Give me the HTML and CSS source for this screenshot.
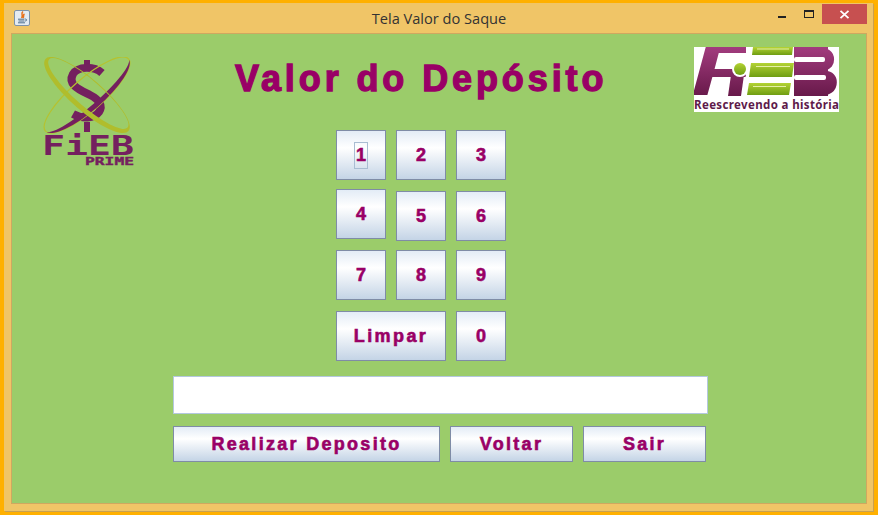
FILE: index.html
```html
<!DOCTYPE html>
<html lang="pt">
<head>
  <meta charset="UTF-8">
  <title>Tela Valor do Saque</title>
  <link rel="stylesheet" href="styles.css">
</head>
<body>
  <div class="window">
    <div class="titlebar">
      <svg class="app-icon" width="16" height="16" viewBox="0 0 16 16">
        <rect x="0.5" y="0.5" width="15" height="15" rx="1.5" fill="#e4ebf2" stroke="#7f93a8"/>
        <path d="M9 1.5 C6 4 10 5 7.5 8 M10.5 4 C8.5 5 10.5 6 9 8" fill="none" stroke="#e8701a" stroke-width="1.5"/>
        <path d="M4 9.2 H10 M4.5 11 H10 M4 12.8 H11 M10.5 9 C13.5 9 13.5 11 10.5 11" fill="none" stroke="#4f6f8f" stroke-width="1"/>
      </svg>
      <span class="window-title">Tela Valor do Saque</span>
      <div class="controls">
        <span class="ctl-min"></span>
        <span class="ctl-max"></span>
        <span class="ctl-close">
          <svg width="11" height="9" viewBox="0 0 11 9"><path d="M1.5 0.8 L9.5 8.2 M9.5 0.8 L1.5 8.2" stroke="#fff" stroke-width="1.8"/></svg>
        </span>
      </div>
    </div>

    <div class="content">
      <svg class="logo-prime" width="96" height="110" viewBox="0 0 96 110">
        <path d="M47 3 V13 M47 65 V75" stroke="#74205f" stroke-width="6" fill="none"/>
        <path d="M62 16 C54 9 38 9 33 17 C27 28 40 33 50 38 C60 43 63 49 59 55 C54 62 42 62 33 57" fill="none" stroke="#74205f" stroke-width="8"/>
        <g transform="rotate(-41 47 38)">
          <ellipse cx="47" cy="38" rx="55" ry="16" fill="none" stroke="#b6c22f" stroke-width="1.2"/>
          <path d="M-8 38 A55 16 0 0 0 102 38 A55 11 0 0 1 -8 38 Z" fill="#74205f"/>
        </g>
        <g transform="rotate(41 47 38)">
          <path fill-rule="evenodd" fill="#b0bd2c" d="M-8 38 a55 16 0 1 0 110 0 a55 16 0 1 0 -110 0 Z M-5 36 a52 13 0 1 0 104 0 a52 13 0 1 0 -104 0 Z"/>
        </g>
        <text class="prime-name" x="2" y="98" textLength="92" lengthAdjust="spacingAndGlyphs">FiEB</text>
        <text class="prime-sub" x="45" y="108" textLength="49" lengthAdjust="spacingAndGlyphs">PRIME</text>
      </svg>

      <div class="center">
        <h1>Valor do Depósito</h1>

        <div class="keypad">
          <button class="key"><span class="focus-ring">1</span></button>
          <button class="key">2</button>
          <button class="key">3</button>
          <button class="key key-up">4</button>
          <button class="key">5</button>
          <button class="key">6</button>
          <button class="key">7</button>
          <button class="key">8</button>
          <button class="key">9</button>
          <button class="key key-wide">Limpar</button>
          <button class="key">0</button>
        </div>

        <input class="amount" type="text">

        <div class="actions">
          <button class="action action-main">Realizar Deposito</button>
          <button class="action">Voltar</button>
          <button class="action">Sair</button>
        </div>
      </div>

      <svg class="logo-fieb" width="145" height="65" viewBox="0 0 145 65">
        <defs>
          <linearGradient id="purple" gradientUnits="userSpaceOnUse" x1="0" y1="0" x2="0" y2="49">
            <stop offset="0" stop-color="#a23c7e"/>
            <stop offset="1" stop-color="#68194a"/>
          </linearGradient>
          <linearGradient id="green" x1="0" y1="0" x2="0" y2="1">
            <stop offset="0" stop-color="#b4d334"/>
            <stop offset="1" stop-color="#6f9d12"/>
          </linearGradient>
        </defs>
        <rect width="145" height="65" fill="#fff"/>
        <text class="fieb-big" x="-3" y="48" font-size="72" textLength="62" lengthAdjust="spacingAndGlyphs">F</text>
        <text class="fieb-big fieb-b" x="96" y="49" font-size="71" textLength="50" lengthAdjust="spacingAndGlyphs">B</text>
        <rect x="52" y="0" width="50" height="50" fill="#fff"/>
        <rect x="100" y="0" width="34" height="49" fill="url(#purple)"/>
        <rect x="100" y="10" width="31" height="5" rx="2" fill="#fff"/>
        <rect x="100" y="28" width="32" height="5" rx="2" fill="#fff"/>
        <path d="M37 28 H50 L47 49 H34 Z" fill="url(#purple)"/>
        <circle cx="46" cy="22" r="8" fill="#fff"/>
        <circle cx="46" cy="22" r="6" fill="url(#green)"/>
        <path d="M59 0 H99 L98 8 H58 Z" fill="url(#green)"/>
        <path d="M57 16 H100 L98 30 H55 Z" fill="url(#green)"/>
        <path d="M55 36 H97 L95 48 H53 Z" fill="url(#green)"/>
        <path d="M62 19.5 H96 M59 39.5 H92 M63 2 H95" stroke="#e6f0a8" stroke-width="1"/>
        <text class="fieb-slogan" x="0" y="62" textLength="145" lengthAdjust="spacing">Reescrevendo a história</text>
      </svg>
    </div>
  </div>
</body>
</html>
```

FILE: styles.css
```css
html, body {
  height: 100%;
}

body {
  margin: 0;
  overflow: hidden;
  background: #ffb000;
  font-family: "Liberation Sans", Arial, sans-serif;
}

.window {
  box-sizing: border-box;
  width: 869px;
  height: 508px;
  margin: 3px 0 0 4px;
  padding: 0 6px 7px 7px;
  display: flex;
  flex-direction: column;
  background: #f0c567;
  box-shadow: 1px 1px 0 #c9a050;
}

.titlebar {
  flex: none;
  height: 30px;
  display: flex;
  align-items: flex-start;
  position: relative;
}

.app-icon {
  margin: 7px 0 0 3px;
}

.window-title {
  position: absolute;
  left: 0;
  right: 0;
  top: 6px;
  text-align: center;
  font-family: "Open Sans", "Noto Sans", sans-serif;
  font-size: 14.6px;
  line-height: 19px;
  color: #333;
}

.controls {
  margin-left: auto;
  display: flex;
  align-items: flex-start;
  position: relative;
}

.ctl-min {
  width: 8px;
  height: 2px;
  margin: 13px 18px 0 0;
  background: #222;
}

.ctl-max {
  box-sizing: border-box;
  width: 10px;
  height: 8px;
  margin: 7px 8px 0 0;
  border: 1px solid #222;
  border-top-width: 2px;
}

.ctl-close {
  width: 45px;
  height: 20px;
  margin-top: 1px;
  display: flex;
  align-items: center;
  justify-content: center;
  background: #c75050;
}

.content {
  flex: 1;
  display: grid;
  grid-template-columns: 161px 535px 1fr;
  align-items: start;
  background: #9bcc6a;
  border: 1px solid #cfa860;
}

.logo-prime {
  margin: 23px 0 0 28px;
}

.prime-name {
  font-family: "DejaVu Sans Mono", monospace;
  font-size: 27px;
  font-weight: bold;
  fill: #74205f;
}

.prime-sub {
  font-family: "DejaVu Sans Mono", monospace;
  font-size: 11px;
  font-weight: bold;
  fill: #74205f;
  stroke: #74205f;
  stroke-width: 0.4px;
}

.logo-fieb {
  margin: 13px 0 0 -14px;
}

.fieb-big {
  font-family: "Liberation Sans", sans-serif;
  font-weight: bold;
  font-style: italic;
  fill: url(#purple);
}

.fieb-b {
  font-style: normal;
}

.fieb-slogan {
  font-family: "Noto Sans", sans-serif;
  font-size: 11.5px;
  font-weight: bold;
  fill: #5e1a4a;
}

.center {
  min-width: 0;
}

h1 {
  margin: 25px 0 0 62px;
  font-size: 36px;
  line-height: 40px;
  font-weight: bold;
  letter-spacing: 3.9px;
  white-space: nowrap;
  color: #990066;
  -webkit-text-stroke: 1.3px #990066;
}

.key, .action {
  box-sizing: border-box;
  padding: 0;
  font-family: "Liberation Sans", Arial, sans-serif;
  font-weight: bold;
  font-size: 18px;
  color: #990066;
  -webkit-text-stroke: 0.6px #990066;
  border: 1px solid #7f8ca6;
  border-radius: 0;
  background: linear-gradient(#e3ecf6 0%, #ffffff 35%, #c4d4e6 100%);
}

.keypad {
  margin: 31px 0 0 163px;
  display: grid;
  grid-template-columns: 50px 50px 50px;
  grid-template-rows: 61px 59px 61px 50px;
  column-gap: 10px;
}

.key {
  width: 50px;
  height: 50px;
}

.key-up {
  margin-top: -2px;
}

.key-wide {
  grid-column: span 2;
  width: 110px;
  letter-spacing: 2.4px;
}

.focus-ring {
  display: inline-block;
  width: 14px;
  height: 27px;
  line-height: 25px;
  box-sizing: border-box;
  border: 1px solid #a9bdd2;
}

.amount {
  display: block;
  box-sizing: border-box;
  width: 535px;
  height: 38px;
  margin-top: 15px;
  padding: 0 4px;
  background: #fff;
  border: 1px solid #b4c8de;
  outline: none;
}

.actions {
  margin-top: 12px;
  display: flex;
  gap: 10px;
}

.action {
  width: 123px;
  height: 36px;
  letter-spacing: 2.3px;
}

.action-main {
  width: 267px;
}
```
